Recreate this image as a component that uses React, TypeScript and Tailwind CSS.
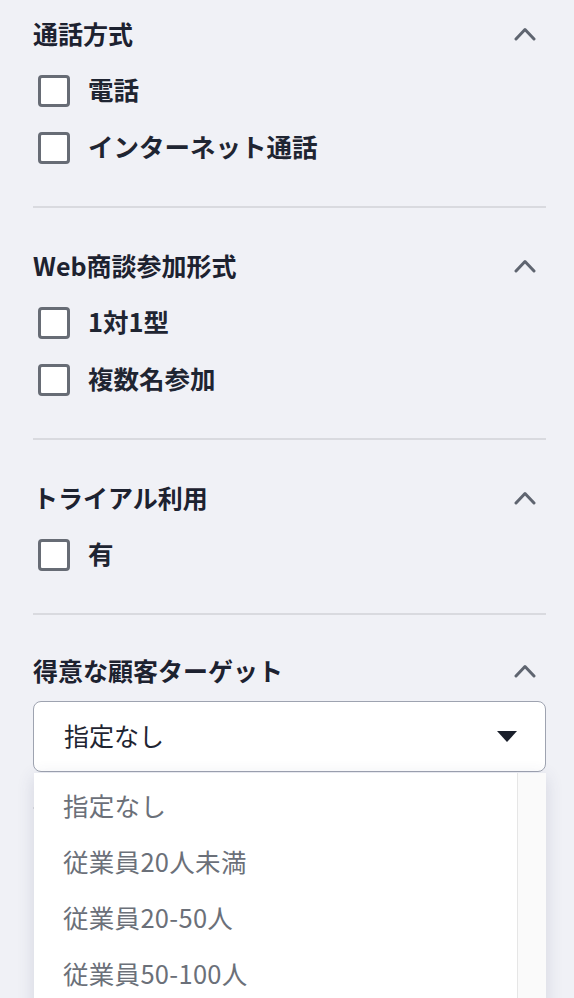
import React from "react";

const FONT = { fontFamily: '"Noto Sans CJK JP", "Noto Sans", sans-serif' };

function Chevron() {
  return (
    <svg width="22" height="14" viewBox="0 0 22 14" fill="none" className="mr-[10px]">
      <polyline
        points="2,12 11,2.5 20,12"
        stroke="#5f6570"
        strokeWidth="3"
        strokeLinecap="round"
        strokeLinejoin="round"
      />
    </svg>
  );
}

function Title({ text }: { text: string }) {
  return (
    <div className="flex h-[36px] items-center justify-between">
      <h3 className="-mt-[3px] text-[25px] leading-[36px] font-bold text-[#1d2230]">{text}</h3>
      <Chevron />
    </div>
  );
}

function CheckItem({ label }: { label: string }) {
  return (
    <label className="flex h-[57px] items-center">
      <span className="ml-[5px] h-[32px] w-[32px] rounded-[4px] border-[3px] border-[#676c75] bg-white" />
      <span className="-mt-[2px] ml-[18px] text-[25.5px] font-semibold text-[#1f2532]">{label}</span>
    </label>
  );
}

function CheckSection({ title, items, first }: { title: string; items: string[]; first?: boolean }) {
  return (
    <section>
      <div className={first ? "pt-[16px] pb-[30px]" : "pt-[40px] pb-[30px]"}>
        <Title text={title} />
        <div className="mt-[10px]">
          {items.map((it) => (
            <CheckItem key={it} label={it} />
          ))}
        </div>
      </div>
      <div className="h-[2px] bg-[#d9dadf]" />
    </section>
  );
}

const options = ["指定なし", "従業員20人未満", "従業員20-50人", "従業員50-100人"];

export default function App() {
  return (
    <main style={FONT} className="h-[998px] overflow-hidden bg-[#f0f1f6] pl-[33px] pr-[28px]">
      <CheckSection first title="通話方式" items={["電話", "インターネット通話"]} />
      <CheckSection title="Web商談参加形式" items={["1対1型", "複数名参加"]} />
      <CheckSection title="トライアル利用" items={["有"]} />

      <section className="relative pt-[38px]">
        <Title text="得意な顧客ターゲット" />
        <div className="mt-[12px] flex h-[71px] items-center justify-between rounded-[8px] border border-[#9ea3b0] bg-white pl-[30px] pr-[28px]">
          <span className="-mt-[2px] text-[25px] text-[#1f2532]">指定なし</span>
          <svg width="20" height="11" viewBox="0 0 20 11">
            <polygon points="0,0 20,0 10,11" fill="#1a1f2b" />
          </svg>
        </div>
        <div className="mt-[35px] h-[2px] bg-[#d9dadf]" />

        {/* open dropdown list */}
        <div className="absolute left-[1px] right-0 top-[158px] flex h-[240px] bg-white shadow-[0_4px_16px_rgba(60,70,110,0.16)]">
          <ul className="flex-1 pt-[5px]">
            {options.map((o) => (
              <li key={o} className="flex h-[56px] items-center pl-[29px] text-[25.5px] tracking-[0.3px] text-[#6b7079]">
                <span className="-mt-[2px]">{o}</span>
              </li>
            ))}
          </ul>
          <div className="w-[29px] border-l border-[#e6e6e6] bg-[#fafafa]" />
        </div>
      </section>
    </main>
  );
}
